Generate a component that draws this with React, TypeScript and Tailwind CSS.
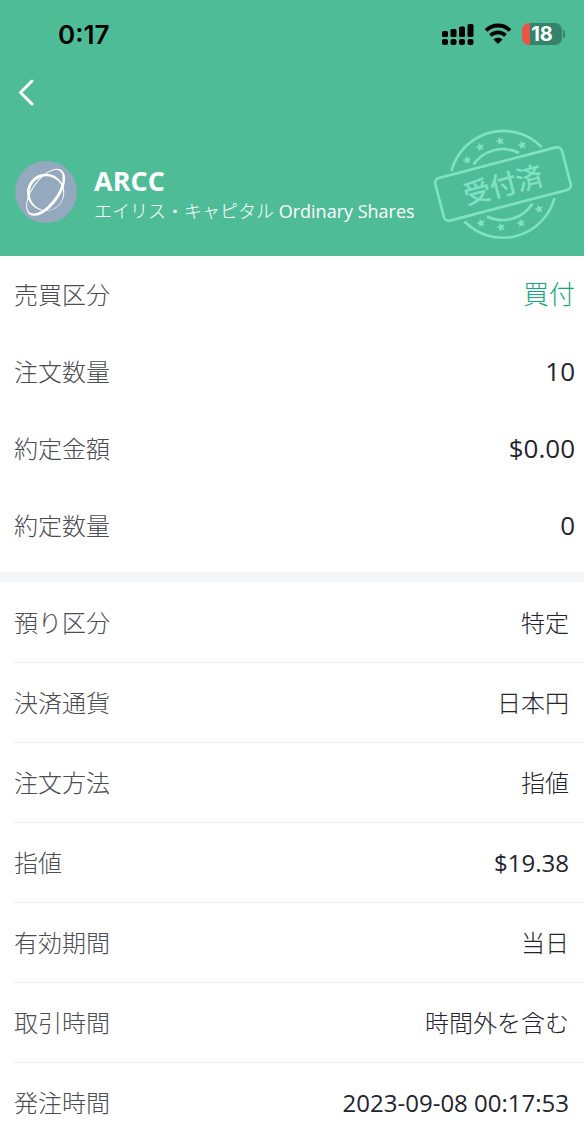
import type { ReactNode } from "react";

const summary = [
    { label: "売買区分", value: "買付", style: "font-light text-[#14a876]" },
    { label: "注文数量", value: "10", style: "text-[#24242f]" },
    { label: "約定金額", value: "$0.00", style: "text-[#24242f]" },
    { label: "約定数量", value: "0", style: "text-[#24242f]" },
];

const details = [
    { label: "預り区分", value: "特定", weight: "font-light" },
    { label: "決済通貨", value: "日本円", weight: "font-light" },
    { label: "注文方法", value: "指値", weight: "font-light" },
    { label: "指値", value: "$19.38", weight: "font-normal" },
    { label: "有効期間", value: "当日", weight: "font-light" },
    { label: "取引時間", value: "時間外を含む", weight: "font-light" },
    { label: "発注時間", value: "2023-09-08 00:17:53", weight: "font-normal" },
];

const stars = [
    [43, 40],
    [56, 27],
    [76, 21],
    [98, 25],
    [57, 103],
    [77, 107],
    [97, 103],
    [115, 89],
];

function SignalIcon() {
    return (
        <svg width="32" height="23" viewBox="0 0 32 23" aria-hidden="true">
            <rect x="0" y="8" width="6" height="6" rx="1.500" />
            <rect x="8.500" y="6" width="6" height="8" rx="1.500" />
            <rect x="17" y="3.500" width="6" height="10.500" rx="1.500" />
            <rect x="25.500" y="1" width="6" height="13" rx="1.500" />
            <rect x="0" y="16" width="6" height="6" rx="2" />
            <rect x="8.500" y="16" width="6" height="6" rx="2" />
            <rect x="17" y="16" width="6" height="6" rx="2" />
            <rect x="25.500" y="16" width="6" height="6" rx="2" />
        </svg>
    );
}

function WifiIcon() {
    return (
        <svg width="28" height="22" viewBox="0 0 28 22" aria-hidden="true">
            <path d="M2 7.500C8.500 .8 19.500 .8 26 7.500" fill="none" stroke="black" strokeWidth="3.800" />
            <path d="M6.500 12.500C10.700 8.400 17.300 8.400 21.500 12.500" fill="none" stroke="black" strokeWidth="3.800" />
            <path d="M9.500 16.500c2.600-2.500 6.400-2.500 9 0L14 21z" />
        </svg>
    );
}

function Battery() {
    return (
        <div className="flex items-center gap-px">
            <div className="flex h-[22px] w-10 items-center justify-center rounded-[7px] bg-linear-to-r from-[#ea5545] from-20% to-[#35836a] to-20% font-[Inter,sans-serif] text-xl leading-none font-bold text-white">
                18
            </div>
            <div className="h-2 w-0.5 rounded-r-full bg-[#35836a]" />
        </div>
    );
}

function Logo() {
    return (
        <svg className="shrink-0" width="62" height="62" viewBox="0 0 186 186" aria-hidden="true">
            <circle cx="93" cy="93" r="93" fill="#94a8be" />
            <g fill="white" fillRule="evenodd">
                <path d="M36 94a56 56 0 1 0 112 0a56 56 0 1 0-112 0zM44 97a50.500 51 0 1 0 101 0a50.500 51 0 1 0-101 0z" />
                <g transform="rotate(-54 92 94)">
                    <path d="M10 94a82 41 0 1 0 164 0a82 41 0 1 0-164 0zM15 91a77 35 0 1 0 154 0a77 35 0 1 0-154 0z" />
                </g>
            </g>
        </svg>
    );
}

function Stamp() {
    return (
        <svg className="shrink-0" width="160" height="130" viewBox="0 0 160 130" role="img" aria-label="受付済">
            <g fill="none" stroke="#80e2c2" strokeWidth="2.600">
                <path d="M27.500 51A53.500 53.500 0 0 1 117.500 27" />
                <path d="M40.500 101.500A53.500 53.500 0 0 0 130.500 78" />
                <path d="M49.500 44.500A35.500 35.500 0 0 1 95 33" />
                <path d="M63 96.500A35.500 35.500 0 0 0 108.500 83.500" />
                <rect x="13.500" y="42" width="131" height="44" rx="5" transform="rotate(-14.700 79 64)" />
            </g>
            <g fill="#80e2c2">
                {stars.map(([x, y]) => (
                    <path
                        key={`${x}-${y}`}
                        transform={`translate(${x} ${y}) rotate(-15)`}
                        d="M0-4.500L1.300-1.500 4.400-1.300 2 .8 2.700 3.800 0 2.200-2.700 3.800-2 .8-4.400-1.300-1.300-1.500z"
                    />
                ))}
                <text
                    x="79"
                    y="75"
                    textAnchor="middle"
                    transform="rotate(-14.700 79 64)"
                    className="text-[27px] font-medium"
                >
                    受付済
                </text>
            </g>
        </svg>
    );
}

function Row({ label, className, children }: { label: string; className: string; children: ReactNode }) {
    return (
        <div className={`flex items-center justify-between ${className}`}>
            <dt className="text-2xl font-light text-[#4a4c52]">{label}</dt>
            {children}
        </div>
    );
}

export default function App() {
    return (
        <main lang="ja" className="h-screen overflow-hidden bg-white font-['Open_Sans','Noto_Sans_CJK_JP',sans-serif]">
            <header className="bg-[#4fbc98] pb-1.5">
                <div className="flex h-[68px] items-center justify-between pr-[19px] pl-[58px]">
                    <time className="font-[Inter,sans-serif] text-[26px] font-semibold text-black">0:17</time>
                    <div className="flex items-center gap-2.5">
                        <SignalIcon />
                        <WifiIcon />
                        <Battery />
                    </div>
                </div>
                <button type="button" aria-label="戻る" className="flex h-[52px] w-[52px] items-center pb-1 pl-4">
                    <svg width="20" height="28" viewBox="0 0 20 28" fill="none" aria-hidden="true">
                        <path d="M16 3L4.500 14.500 16 26" stroke="white" strokeWidth="3" strokeLinecap="round" strokeLinejoin="round" />
                    </svg>
                </button>
                <div className="flex items-center justify-between pl-[15px]">
                    <div className="flex items-center gap-[17px] pt-3.5">
                        <Logo />
                        <div className="pt-1.5 whitespace-nowrap text-white">
                            <h1 className="text-[27px] leading-8 font-bold">ARCC</h1>
                            <p className="text-lg leading-7 font-light">
                                エイリス・キャピタル <span className="font-normal">Ordinary Shares</span>
                            </p>
                        </div>
                    </div>
                    <Stamp />
                </div>
            </header>
            <dl className="border-b-10 border-[#f5f6f9] pb-2">
                {summary.map((item) => (
                    <Row key={item.label} label={item.label} className="h-[77px] pr-[9px] pl-3.5">
                        <dd className={`text-[26px] ${item.style}`}>{item.value}</dd>
                    </Row>
                ))}
            </dl>
            <dl className="pt-px pl-3.5">
                {details.map((item) => (
                    <Row key={item.label} label={item.label} className="h-20 border-b border-[#efeff1] pr-[15px]">
                        <dd className={`text-2xl text-[#24242f] ${item.weight}`}>{item.value}</dd>
                    </Row>
                ))}
            </dl>
        </main>
    );
}
